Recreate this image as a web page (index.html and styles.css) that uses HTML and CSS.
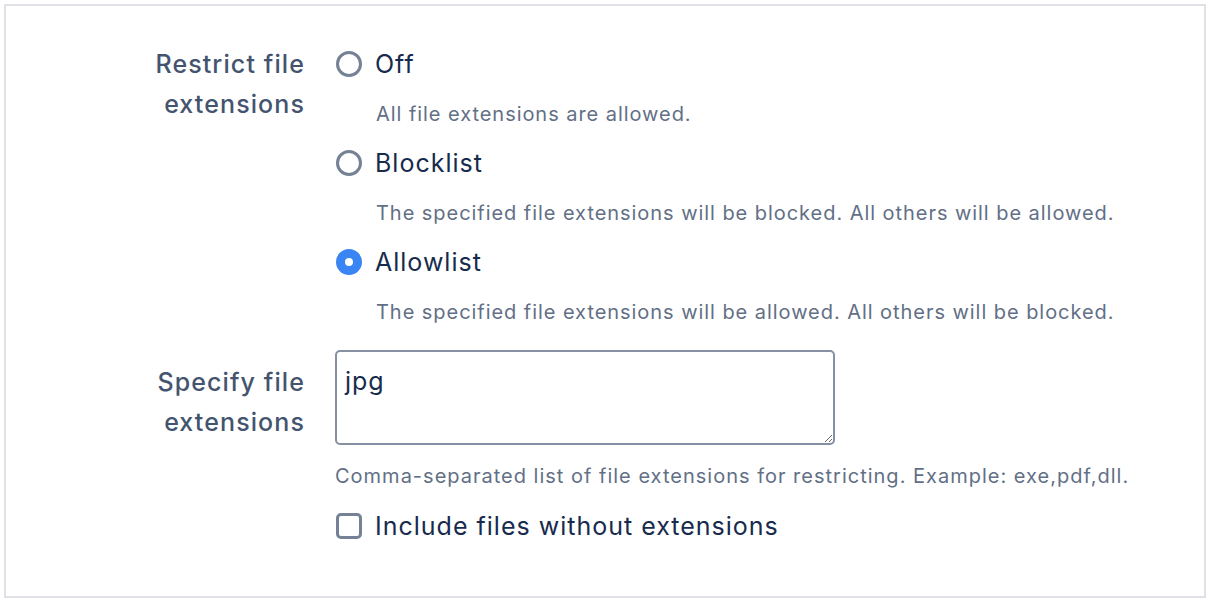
FILE: index.html
```html
<!DOCTYPE html>
<html>
<head>
<meta charset="utf-8">
<link rel="stylesheet" href="styles.css">
</head>
<body>
<div class="panel">
  <form class="form">
    <div class="label">Restrict file<br>extensions</div>
    <div class="field">
      <div class="option">
        <span class="radio"></span><span class="opt-text">Off</span>
      </div>
      <div class="desc">All file extensions are allowed.</div>
      <div class="option">
        <span class="radio"></span><span class="opt-text">Blocklist</span>
      </div>
      <div class="desc">The specified file extensions will be blocked. All others will be allowed.</div>
      <div class="option">
        <span class="radio checked"></span><span class="opt-text">Allowlist</span>
      </div>
      <div class="desc">The specified file extensions will be allowed. All others will be blocked.</div>
    </div>

    <div class="label label-2">Specify file<br>extensions</div>
    <div class="field field-2">
      <textarea class="textarea">jpg</textarea>
      <div class="help">Comma-separated list of file extensions for restricting. Example: exe,pdf,dll.</div>
      <div class="option">
        <span class="checkbox"></span><span class="opt-text">Include files without extensions</span>
      </div>
    </div>
  </form>
</div>
</body>
</html>
```

FILE: styles.css
```css
html, body {
  margin: 0;
  padding: 0;
  background: #ffffff;
}
body {
  font-family: Inter, "Noto Sans", sans-serif;
  padding: 4px;
}
.panel {
  width: 1198px;
  height: 590px;
  border: 2px solid #dfe1e6;
  box-sizing: content-box;
}
.form {
  display: grid;
  grid-template-columns: 298px 500px;
  column-gap: 31px;
  padding-top: 38px;
}
.label {
  text-align: right;
  font-size: 25px;
  letter-spacing: 1.1px;
  line-height: 40px;
  color: #44546f;
  font-weight: 500;
  margin-right: -1px;
}
.label-2 {
  margin-top: 21px;
}
.field {
  display: flex;
  flex-direction: column;
}
.field-2 {
  margin-top: 9px;
}
.option {
  display: flex;
  align-items: center;
  height: 40px;
  white-space: nowrap;
}
.opt-text {
  font-size: 25px;
  letter-spacing: 1px;
  color: #172b4d;
  margin-left: 13px;
}
.radio {
  width: 26px;
  height: 26px;
  box-sizing: border-box;
  border: 3px solid #758195;
  border-radius: 50%;
  margin-left: 1px;
  flex: none;
}
.radio.checked {
  border: 9px solid #3a84f4;
  background: #ffffff;
}
.checkbox {
  width: 26px;
  height: 26px;
  box-sizing: border-box;
  border: 3px solid #758195;
  border-radius: 5px;
  margin-left: 1px;
  flex: none;
}
.desc {
  font-size: 20px;
  letter-spacing: 0.95px;
  line-height: 28px;
  color: #626f86;
  margin: 16px 0 15px 41px;
  white-space: nowrap;
}
.textarea {
  width: 500px;
  height: 95px;
  box-sizing: border-box;
  border: 2px solid #8590a2;
  border-radius: 5px;
  padding: 9px 8px;
  font-family: Inter, "Noto Sans", sans-serif;
  font-size: 25px;
  letter-spacing: 1px;
  line-height: 40px;
  color: #172b4d;
  resize: vertical;
  margin: 0;
  display: block;
}
.help {
  font-size: 20px;
  letter-spacing: 1px;
  line-height: 28px;
  color: #626f86;
  margin: 17px 0 16px 0;
  white-space: nowrap;
}
```
